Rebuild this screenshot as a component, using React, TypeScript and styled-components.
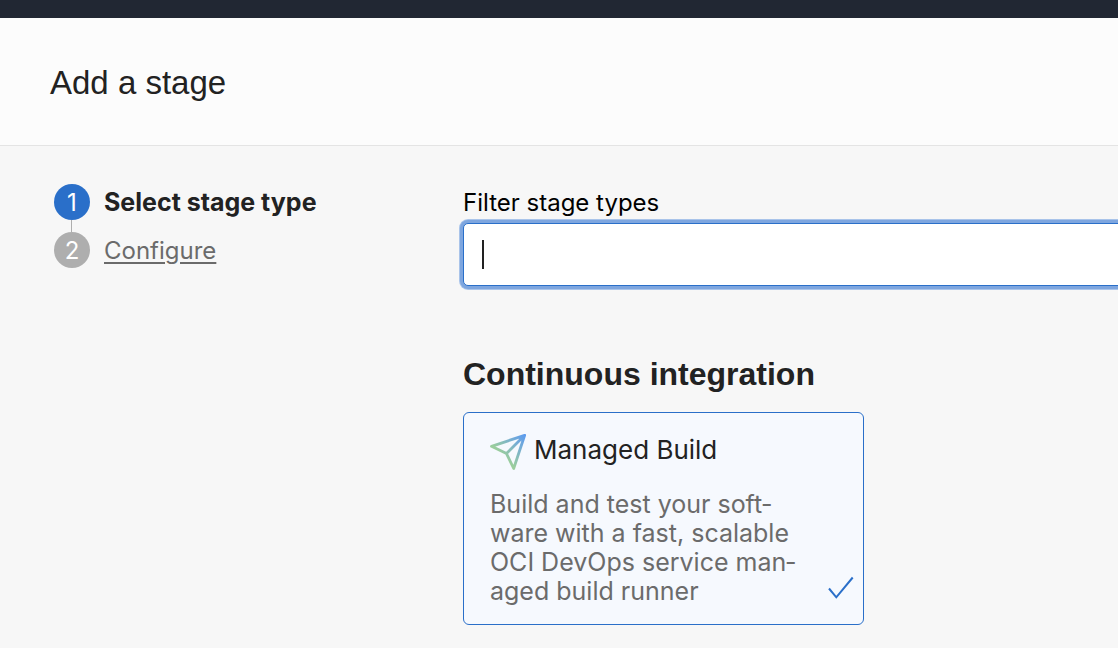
import React, { useState } from "react";
import styled, { createGlobalStyle } from "styled-components";

const heading = `"Liberation Sans", Arial, sans-serif`;
const body = `Inter, "Open Sans", sans-serif`;
const blue = "#2a6fc9";

const GlobalStyle = createGlobalStyle`
  *, *::before, *::after { box-sizing: border-box; }
  body {
    margin: 0;
    background: #f7f7f7;
    color: #222;
    font-family: ${body};
    font-size: 24px;
    line-height: 29px;
  }
`;

const Page = styled.div`
  min-height: 100vh;
  overflow: hidden;
`;

const TopBar = styled.div`
  height: 18px;
  background: #212733;
`;

const Header = styled.header`
  padding: 45px 50px 43px;
  background: #fcfcfc;
  border-bottom: 1px solid #e4e4e4;
`;

const Title = styled.h1`
  margin: 0;
  font: 400 33px/39px ${heading};
`;

const Content = styled.div`
  display: grid;
  grid-template-columns: 409px minmax(0, 1fr);
  padding: 38px 0 24px 54px;
`;

const Steps = styled.ol`
  display: flex;
  flex-direction: column;
  gap: 12px;
  margin: 0;
  padding: 0;
  list-style: none;
`;

const Step = styled.li`
  position: relative;
  display: flex;
  align-items: center;
  gap: 14px;
  height: 36px;

  &:not(:last-child)::after {
    content: "";
    position: absolute;
    top: 36px;
    left: 17px;
    width: 1px;
    height: 12px;
    background: #aeaeae;
  }
`;

const StepNumber = styled.span<{ $active?: boolean }>`
  display: flex;
  align-items: center;
  justify-content: center;
  width: 36px;
  height: 36px;
  border-radius: 50%;
  background: ${(p) => (p.$active ? blue : "#aeaeae")};
  color: #fff;
`;

const StepName = styled.span`
  font-size: 25px;
  font-weight: 700;
`;

const StepLink = styled.a`
  color: #6b6b6b;
  text-decoration: underline;
  text-decoration-thickness: 2px;
  text-underline-offset: 3px;
`;

const FilterLabel = styled.label`
  display: block;
  padding-top: 4px;
  color: #000;
`;

const FilterField = styled.div`
  position: relative;
  margin: 6px -24px 0 0;
`;

const FilterInput = styled.input`
  display: block;
  width: 100%;
  height: 63px;
  padding: 0 18px;
  border: 1px solid ${blue};
  border-radius: 5px;
  outline: none;
  background: #fff;
  box-shadow: 0 0 0 3px #7ea6df, 0 0 0 4px #a9c4ea;
  caret-color: transparent;
  color: #222;
  font: inherit;
`;

const Caret = styled.span`
  position: absolute;
  top: 17px;
  left: 19px;
  width: 2px;
  height: 29px;
  background: #222;
  pointer-events: none;
`;

const SectionTitle = styled.h2`
  margin: 68px 0 18px;
  font: 700 32px/40px ${heading};
`;

const StageCard = styled.label`
  position: relative;
  display: block;
  width: 401px;
  max-width: 100%;
  padding: 21px 60px 18px 26px;
  border: 1px solid ${blue};
  border-radius: 6px;
  background: #f6f9fe;
  cursor: pointer;
`;

const StageRadio = styled.input`
  position: absolute;
  inset: 0;
  width: 100%;
  height: 100%;
  margin: 0;
  opacity: 0;
  cursor: pointer;
`;

const StageHead = styled.span`
  display: flex;
  gap: 8px;
  height: 36px;
`;

const StageName = styled.span`
  font-size: 26px;
  line-height: 32px;
`;

const StageText = styled.span`
  display: block;
  margin-top: 20px;
  color: #6b6b6b;
  font-size: 25px;
`;

const CheckMark = styled.svg`
  position: absolute;
  right: 9px;
  bottom: 24px;
`;

export default function App() {
  const [filter, setFilter] = useState("");
  return (
    <Page>
      <GlobalStyle />
      <TopBar />
      <Header>
        <Title>Add a stage</Title>
      </Header>
      <Content>
        <nav aria-label="Steps">
          <Steps>
            <Step aria-current="step">
              <StepNumber $active>1</StepNumber>
              <StepName>Select stage type</StepName>
            </Step>
            <Step>
              <StepNumber>2</StepNumber>
              <StepLink href="#configure">Configure</StepLink>
            </Step>
          </Steps>
        </nav>
        <main>
          <FilterLabel htmlFor="filter">Filter stage types</FilterLabel>
          <FilterField>
            <FilterInput
              id="filter"
              type="text"
              value={filter}
              onChange={(e) => setFilter(e.target.value)}
            />
            {filter === "" && <Caret />}
          </FilterField>
          <SectionTitle>Continuous integration</SectionTitle>
          <StageCard>
            <StageRadio type="radio" name="stage" value="managed-build" defaultChecked />
            <StageHead>
              <svg width="36" height="36" viewBox="0 0 36 36" fill="none" aria-hidden="true">
                <defs>
                  <linearGradient id="plane" x1="35" y1="1" x2="10" y2="26" gradientUnits="userSpaceOnUse">
                    <stop offset="0" stopColor="#5c9bee" />
                    <stop offset="0.3" stopColor="#73abd8" />
                    <stop offset="0.85" stopColor="#9acd9d" />
                  </linearGradient>
                </defs>
                <path
                  d="M1.5 12.3 34.7 1.3 23.7 34.5 16.5 19.6ZM16.5 19.6 34.7 1.3"
                  stroke="url(#plane)"
                  strokeWidth="2.8"
                  strokeLinejoin="round"
                />
              </svg>
              <StageName>Managed Build</StageName>
            </StageHead>
            <StageText>
              Build and test your soft&shy;ware with a fast, scalable OCI DevOps service
              man&shy;aged build runner
            </StageText>
            <CheckMark width="26" height="24" viewBox="0 0 26 24" fill="none" aria-hidden="true">
              <path d="M1 12.5 8.3 21.3 24.7 1.5" stroke={blue} strokeWidth="2" />
            </CheckMark>
          </StageCard>
        </main>
      </Content>
    </Page>
  );
}
